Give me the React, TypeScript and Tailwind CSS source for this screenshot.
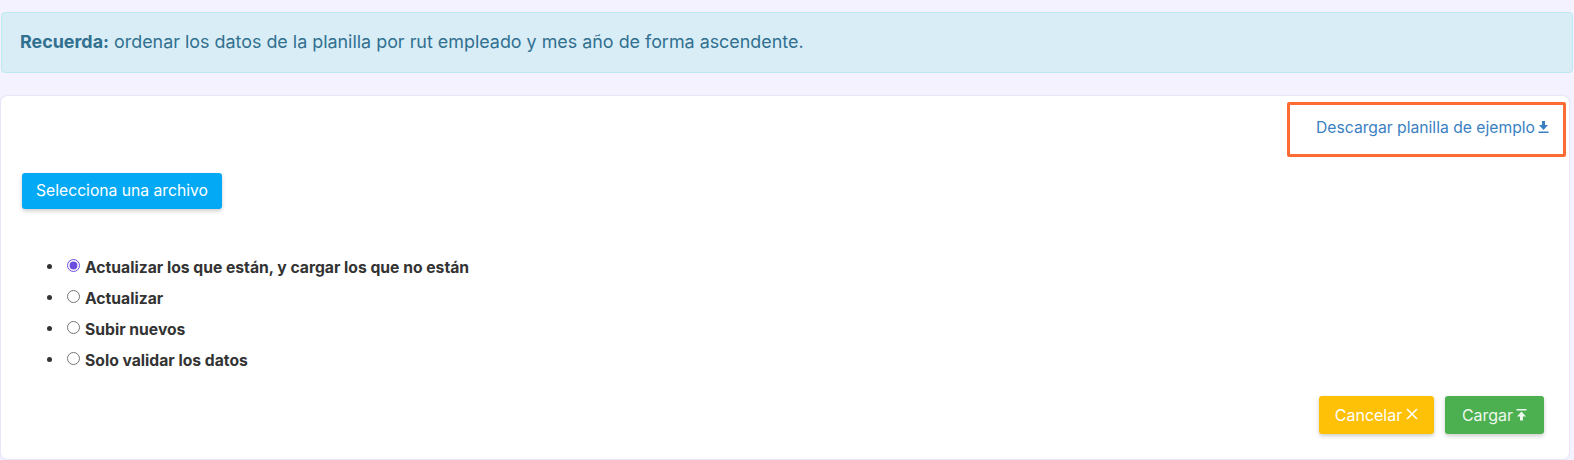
import { FunctionComponent, useState } from 'react';

const options = [
  'Actualizar los que están, y cargar los que no están',
  'Actualizar',
  'Subir nuevos',
  'Solo validar los datos',
];

const DownloadIcon = () => (
  <svg width="11" height="12" viewBox="0 0 11 12" className="inline-block ml-[3px] mb-[2px]">
    <path d="M4 0h3v4h3l-4.5 5L1 4h3z" fill="currentColor" />
    <rect x="0.5" y="10.5" width="10" height="1.5" fill="currentColor" />
  </svg>
);

const UploadIcon = () => (
  <svg width="11" height="12" viewBox="0 0 11 12" className="inline-block ml-[3px] mb-[4px]">
    <rect x="0.5" y="0" width="10" height="1.5" fill="currentColor" />
    <path d="M5.5 2.5L10 7.5H7V11.5H4V7.5H1z" fill="currentColor" />
  </svg>
);

const CloseIcon = () => (
  <svg width="12" height="12" viewBox="0 0 12 12" className="inline-block ml-[4px] mb-[5px]">
    <path d="M1 1L11 11M11 1L1 11" stroke="currentColor" strokeWidth="1.6" />
  </svg>
);

const App: FunctionComponent = () => {
  const [mode, setMode] = useState(0);

  return (
    <div className="min-h-[460px] bg-[#f4f2fe] pt-[12px] px-[1px] font-['Inter',sans-serif]">
      {/* Aviso */}
      <div className="h-[61px] flex items-center px-[18px] bg-[#d9edf7] border border-[#bce8f1] rounded-[4px] text-[17.9px] text-[#31708f]">
        <span>
          <b className="font-bold">Recuerda:</b> ordenar los datos de la planilla por rut empleado y mes año de forma ascendente.
        </span>
      </div>

      {/* Carga */}
      <div className="mt-[23px] mr-[4px] bg-white rounded-[6px] shadow-[0_0_2px_rgba(120,110,200,0.35)] pt-[6px] pb-[25px] px-[21px]">
        <div className="flex justify-end -mr-[18px]">
          <div className="w-[279px] h-[55px] border-[3px] border-[#ff6b35] rounded-[2px] flex items-center justify-end pr-[14px] pb-[4px]">
            <a href="#" className="text-[#3a7fc2] text-[15.7px]">
              Descargar planilla de ejemplo<DownloadIcon />
            </a>
          </div>
        </div>

        <button className="mt-[16px] h-[36px] w-[200px] bg-[#03a9f4] text-white text-[15.7px] rounded-[3px] shadow-[0_2px_4px_rgba(0,0,0,0.2)]">
          Selecciona una archivo
        </button>

        <ul className="mt-[48px] list-disc pl-[42px] text-[15.7px] font-bold text-[#333]">
          {options.map((opt, i) => (
            <li key={opt} className="h-[31px] leading-[20px]">
              <label className="inline-flex items-center ml-[3px] cursor-pointer">
                <input
                  type="radio"
                  name="modo"
                  checked={mode === i}
                  onChange={() => setMode(i)}
                  className="w-[13px] h-[13px] mr-[5px] mb-[4px] accent-[#6a4ce0]"
                />
                {opt}
              </label>
            </li>
          ))}
        </ul>

        <div className="flex justify-end gap-[11px] mt-[15px] mr-[4px]">
          <button className="h-[38px] w-[115px] bg-[#ffc107] text-white text-[16px] rounded-[3px] shadow-[0_2px_4px_rgba(0,0,0,0.2)]">
            Cancelar<CloseIcon />
          </button>
          <button className="h-[38px] w-[99px] bg-[#4caf50] text-[#eef8ee] text-[16px] rounded-[3px] shadow-[0_2px_4px_rgba(0,0,0,0.2)]">
            Cargar<UploadIcon />
          </button>
        </div>
      </div>
    </div>
  );
};

export default App;
